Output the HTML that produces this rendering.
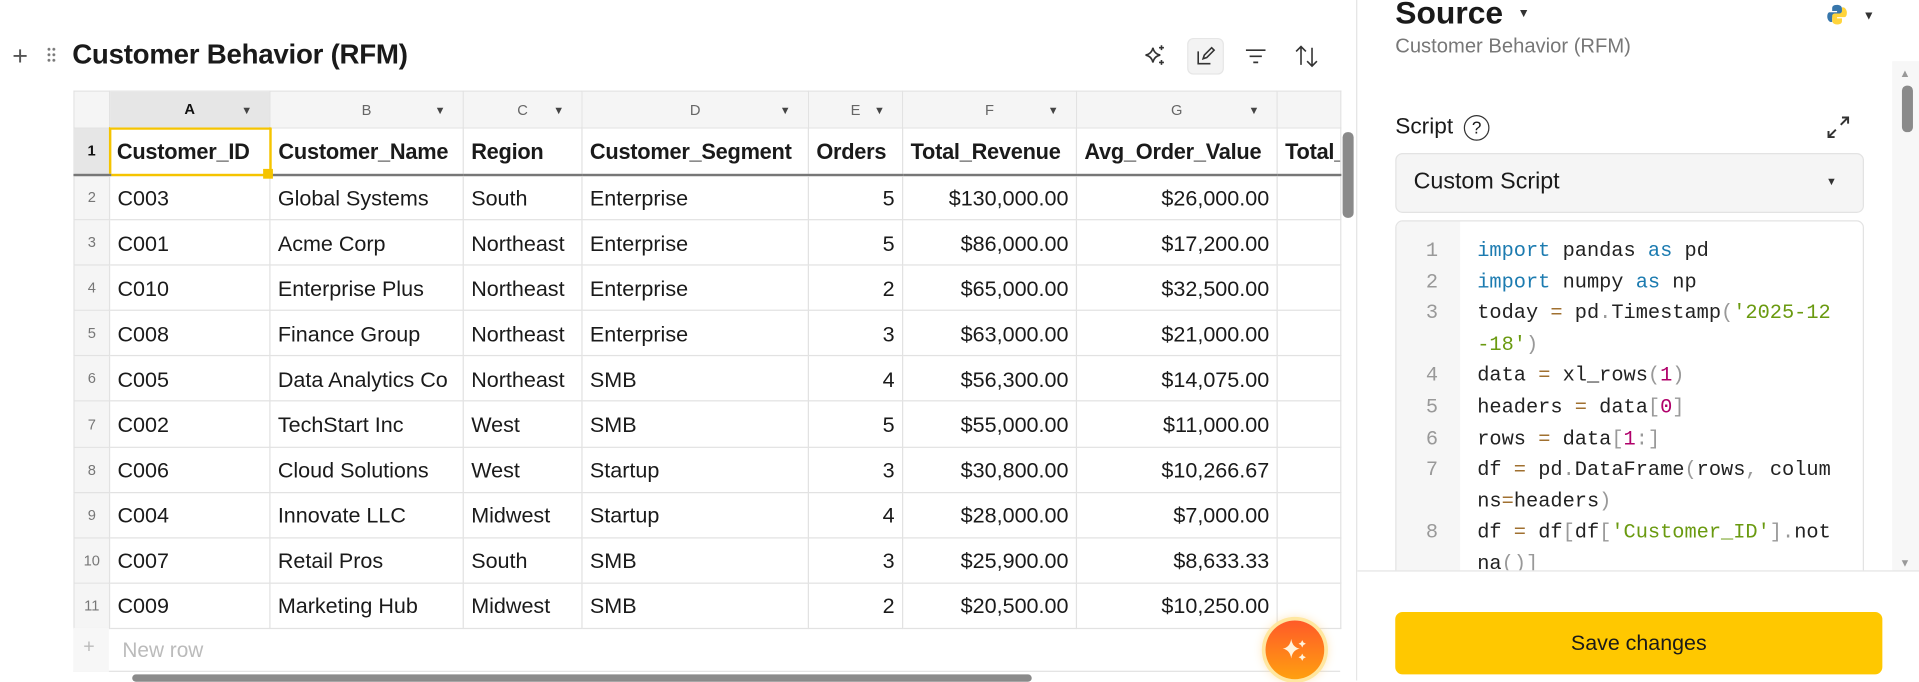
<!DOCTYPE html>
<html><head><meta charset="utf-8"><style>
*{box-sizing:border-box;margin:0;padding:0}
html,body{width:1919px;height:681px;overflow:hidden;background:#fff}
#w{position:absolute;left:0;top:0;width:1568px;height:556px;transform:scale(1.2239);transform-origin:0 0;font-family:"Liberation Sans",sans-serif;color:#1a1a1a}
.a{position:absolute}
table{position:absolute;left:60px;top:74px;width:1035px;border-collapse:collapse;table-layout:fixed;font-size:17.6px}
td{border:1px solid #e2e2e2;height:37.1px;padding:2px 6px 0;white-space:nowrap;overflow:hidden}
tr.h td{height:30px;background:#f5f5f5;color:#666;font-size:12px;text-align:center;position:relative;padding:0}
tr.h td span{position:absolute;right:14px;top:10px;font-size:9px;color:#444}
tr.r1 td{height:38px;font-weight:bold;font-size:17.8px;letter-spacing:-0.2px;border-bottom:2px solid #777}
td.n{background:#f5f5f5;color:#777;font-size:12px;text-align:center;padding:0}
.rt{text-align:right}
.code{font-family:"Liberation Mono",monospace;font-size:16.6px;line-height:25.6px;white-space:pre}
.k{color:#1c7bb0}.s{color:#6a9a10}.o{color:#a07030}.m{color:#b0006a}.p{color:#999}
</style></head><body><div id="w">
<div class="a" style="left:10px;top:33px;font-size:22px;color:#555;font-weight:300">+</div>
<div class="a" style="left:38px;top:38px;width:8px;height:14px;background:radial-gradient(circle,#777 1px,transparent 1.4px) 0 0/4px 4.5px"></div>
<div class="a" style="left:59px;top:32px;font-size:22.6px;font-weight:bold;letter-spacing:-0.2px">Customer Behavior (RFM)</div>
<svg class="a" style="left:934px;top:35px" width="20" height="20" viewBox="0 0 20 20" fill="none" stroke="#333" stroke-width="1.3"><path d="M8 4 Q9 9 14 10 Q9 11 8 16 Q7 11 2 10 Q7 9 8 4Z"/><path d="M15 2v4M13 4h4M15 14v4M13 16h4"/></svg>
<div class="a" style="left:970px;top:31px;width:30px;height:30px;background:#f3f3f3;border-radius:5px;border:1px solid #e6e6e6"></div>
<svg class="a" style="left:976px;top:37px" width="18" height="18" viewBox="0 0 18 18" fill="none" stroke="#333" stroke-width="1.3"><path d="M3 5v10h10M7 11l1-3 6-6 2 2-6 6z"/></svg>
<svg class="a" style="left:1016px;top:37px" width="20" height="18" viewBox="0 0 20 18" stroke="#333" stroke-width="1.4"><path d="M2 4h16M5 9h10M8 14h4"/></svg>
<svg class="a" style="left:1057px;top:35px" width="22" height="22" viewBox="0 0 22 22" fill="none" stroke="#333" stroke-width="1.3"><path d="M6 18V3M2 7l4-4 4 4M15 4v15M11 15l4 4 4-4"/></svg>

<table>
<colgroup><col style="width:29px"><col style="width:131px"><col style="width:158px"><col style="width:97px"><col style="width:185px"><col style="width:77px"><col style="width:142px"><col style="width:164px"><col style="width:52px"></colgroup>
<tr class="h"><td class="n"></td><td style="background:#e6e6e6;color:#111;font-weight:bold">A<span>▼</span></td><td>B<span>▼</span></td><td>C<span>▼</span></td><td>D<span>▼</span></td><td>E<span>▼</span></td><td>F<span>▼</span></td><td>G<span>▼</span></td><td></td></tr>
<tr class="r1"><td class="n" style="background:#e6e6e6;color:#111;font-weight:bold;font-size:12px">1</td><td style="border:2px solid #f5c400;padding-left:5px">Customer_ID</td><td>Customer_Name</td><td>Region</td><td>Customer_Segment</td><td>Orders</td><td>Total_Revenue</td><td>Avg_Order_Value</td><td>Total_</td></tr>
<tr><td class="n">2</td><td>C003</td><td>Global Systems</td><td>South</td><td>Enterprise</td><td class="rt">5</td><td class="rt">$130,000.00</td><td class="rt">$26,000.00</td><td></td></tr>
<tr><td class="n">3</td><td>C001</td><td>Acme Corp</td><td>Northeast</td><td>Enterprise</td><td class="rt">5</td><td class="rt">$86,000.00</td><td class="rt">$17,200.00</td><td></td></tr>
<tr><td class="n">4</td><td>C010</td><td>Enterprise Plus</td><td>Northeast</td><td>Enterprise</td><td class="rt">2</td><td class="rt">$65,000.00</td><td class="rt">$32,500.00</td><td></td></tr>
<tr><td class="n">5</td><td>C008</td><td>Finance Group</td><td>Northeast</td><td>Enterprise</td><td class="rt">3</td><td class="rt">$63,000.00</td><td class="rt">$21,000.00</td><td></td></tr>
<tr><td class="n">6</td><td>C005</td><td>Data Analytics Co</td><td>Northeast</td><td>SMB</td><td class="rt">4</td><td class="rt">$56,300.00</td><td class="rt">$14,075.00</td><td></td></tr>
<tr><td class="n">7</td><td>C002</td><td>TechStart Inc</td><td>West</td><td>SMB</td><td class="rt">5</td><td class="rt">$55,000.00</td><td class="rt">$11,000.00</td><td></td></tr>
<tr><td class="n">8</td><td>C006</td><td>Cloud Solutions</td><td>West</td><td>Startup</td><td class="rt">3</td><td class="rt">$30,800.00</td><td class="rt">$10,266.67</td><td></td></tr>
<tr><td class="n">9</td><td>C004</td><td>Innovate LLC</td><td>Midwest</td><td>Startup</td><td class="rt">4</td><td class="rt">$28,000.00</td><td class="rt">$7,000.00</td><td></td></tr>
<tr><td class="n">10</td><td>C007</td><td>Retail Pros</td><td>South</td><td>SMB</td><td class="rt">3</td><td class="rt">$25,900.00</td><td class="rt">$8,633.33</td><td></td></tr>
<tr><td class="n">11</td><td>C009</td><td>Marketing Hub</td><td>Midwest</td><td>SMB</td><td class="rt">2</td><td class="rt">$20,500.00</td><td class="rt">$10,250.00</td><td></td></tr>
</table>
<div class="a" style="left:215px;top:138px;width:8px;height:8px;background:#f5c400"></div>
<div class="a" style="left:60px;top:513px;width:1035px;height:36px;border-left:1px solid #e2e2e2;border-bottom:1px solid #e2e2e2"></div>
<div class="a" style="left:60px;top:513px;width:29px;height:36px;background:#f7f7f7"></div>
<div class="a" style="left:68px;top:520px;color:#bbb;font-size:16px">+</div>
<div class="a" style="left:100px;top:522px;color:#bbb;font-size:17px">New row</div>
<div class="a" style="left:108px;top:551px;width:735px;height:6px;background:#8a8a8a;border-radius:3px"></div>
<div class="a" style="left:1097px;top:108px;width:9px;height:70px;background:#8a8a8a;border-radius:4px"></div>
<div class="a" style="left:1034px;top:507px;width:48px;height:48px;border-radius:50%;background:linear-gradient(#ff5a28,#ffa010);box-shadow:0 0 0 3px #ffe7a0,0 0 10px #ffd080"></div>
<svg class="a" style="left:1044px;top:517px" width="28" height="28" viewBox="0 0 28 28" fill="#fff3dc"><path d="M11 5Q12 12 18 13Q12 14 11 21Q10 14 4 13Q10 12 11 5Z"/><path d="M20 6l1 2 2 1-2 1-1 2-1-2-2-1 2-1z M20 17l1 2 2 1-2 1-1 2-1-2-2-1 2-1z"/></svg>

<div class="a" style="left:1108px;top:0;width:1px;height:556px;background:#e4e4e4"></div>
<div class="a" style="left:1140px;top:-5px;font-size:26px;font-weight:bold">Source</div>
<div class="a" style="left:1240px;top:6px;font-size:10px;color:#333">▼</div>
<svg class="a" style="left:1492px;top:3px" width="18" height="18" viewBox="0 0 18 18"><path d="M9 1C5 1 5 3 5 4v2h4v1H3C1 7 1 10 1 11s1 4 3 4h1v-3c0-1 1-2 2-2h4c1 0 2-1 2-2V4c0-2-2-3-4-3z" fill="#3776ab"/><path d="M9 17c4 0 4-2 4-3v-2H9v-1h6c2 0 2-3 2-4s-1-4-3-4h-1v3c0 1-1 2-2 2H7c-1 0-2 1-2 2v4c0 2 2 3 4 3z" fill="#ffd43b"/></svg>
<div class="a" style="left:1522px;top:8px;font-size:10px;color:#333">▼</div>
<div class="a" style="left:1140px;top:29px;font-size:16.5px;color:#777">Customer Behavior (RFM)</div>
<div class="a" style="left:1140px;top:92px;font-size:18.5px">Script</div>
<div class="a" style="left:1196px;top:94px;width:21px;height:21px;border:1.3px solid #333;border-radius:50%;text-align:center;font-size:14px;line-height:19px">?</div>
<svg class="a" style="left:1492px;top:94px" width="20" height="20" viewBox="0 0 20 20" fill="none" stroke="#333" stroke-width="1.6"><path d="M12 8l6-6M13 2h5v5M8 12l-6 6M2 13v5h5"/></svg>
<div class="a" style="left:1140px;top:125px;width:383px;height:49px;background:#f5f5f5;border:1px solid #e3e3e3;border-radius:6px"></div>
<div class="a" style="left:1155px;top:138px;font-size:19px">Custom Script</div>
<div class="a" style="left:1492px;top:143px;font-size:9px;color:#333">▼</div>
<div class="a" style="left:1140px;top:180px;width:383px;height:300px;border:1px solid #e3e3e3;border-radius:6px;overflow:hidden">
<div class="a" style="left:0;top:0;width:52px;height:300px;background:#f6f6f6"></div>
<div class="a code" style="left:0;top:11px;width:34px;text-align:right;color:#999">1
2
3

4
5
6
7

8
</div>
<div class="a code" style="left:66px;top:11px;color:#222"><span class="k">import</span> pandas <span class="k">as</span> pd
<span class="k">import</span> numpy <span class="k">as</span> np
today <span class="o">=</span> pd<span class="p">.</span>Timestamp<span class="p">(</span><span class="s">'2025-12</span>
<span class="s">-18'</span><span class="p">)</span>
data <span class="o">=</span> xl_rows<span class="p">(</span><span class="m">1</span><span class="p">)</span>
headers <span class="o">=</span> data<span class="p">[</span><span class="m">0</span><span class="p">]</span>
rows <span class="o">=</span> data<span class="p">[</span><span class="m">1</span><span class="p">:]</span>
df <span class="o">=</span> pd<span class="p">.</span>DataFrame<span class="p">(</span>rows<span class="p">,</span> colum
ns<span class="o">=</span>headers<span class="p">)</span>
df <span class="o">=</span> df<span class="p">[</span>df<span class="p">[</span><span class="s">'Customer_ID'</span><span class="p">]</span><span class="p">.</span>not
na<span class="p">()]</span></div>
</div>
<div class="a" style="left:1546px;top:50px;width:22px;height:420px;background:#f7f7f7"></div>
<div class="a" style="left:1552px;top:55px;font-size:9px;color:#999">▲</div>
<div class="a" style="left:1552px;top:455px;font-size:9px;color:#999">▼</div>
<div class="a" style="left:1554px;top:70px;width:9px;height:38px;background:#8a8a8a;border-radius:4px"></div>
<div class="a" style="left:1109px;top:466px;width:459px;height:90px;background:#fff;border-top:1px solid #e4e4e4"></div>
<div class="a" style="left:1140px;top:500px;width:398px;height:51px;background:#ffc800;border-radius:6px;text-align:center;line-height:51px;font-size:17.5px">Save changes</div>
</div></body></html>
